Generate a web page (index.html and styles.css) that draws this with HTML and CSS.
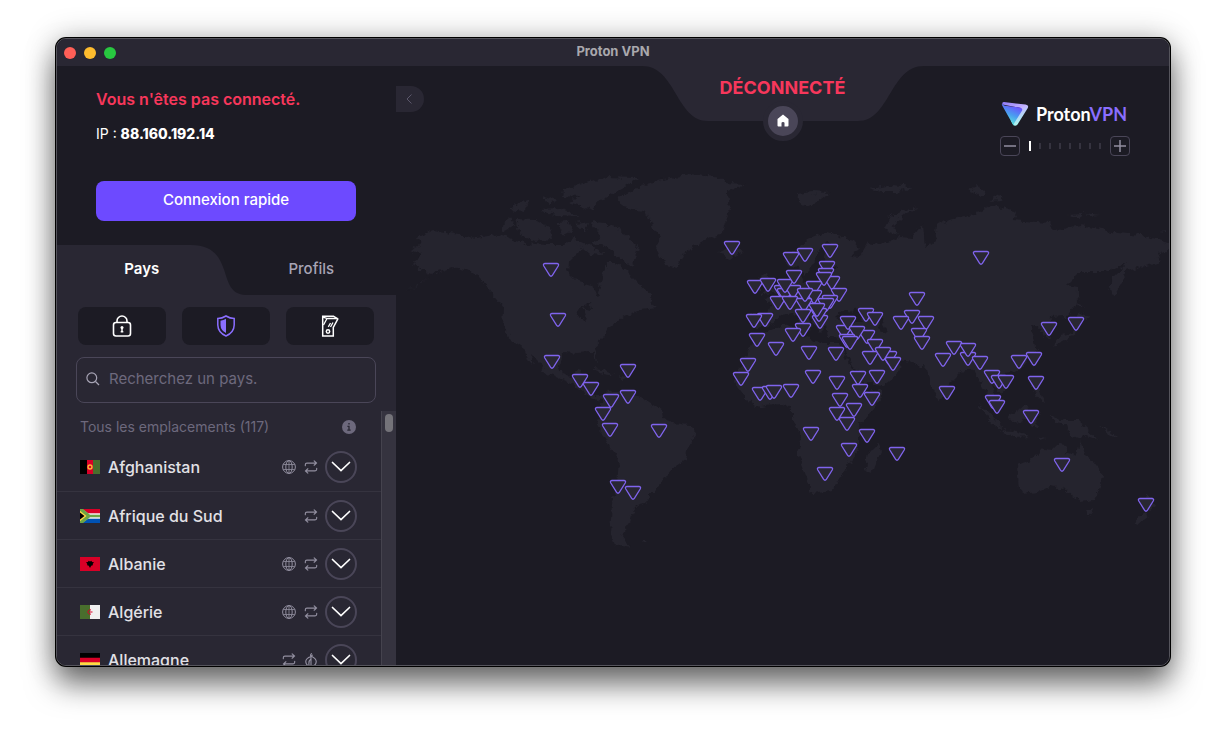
FILE: index.html
```html
<!DOCTYPE html>
<html lang="fr">
<head>
<meta charset="utf-8">
<meta name="viewport" content="width=device-width, initial-scale=1">
<title>Proton VPN</title>
<link rel="stylesheet" href="styles.css">
</head>
<body>
<svg class="defs" aria-hidden="true">
  <symbol id="i-globe" viewBox="0 0 14 14"><g fill="none" stroke="currentColor"><circle cx="7" cy="7" r="6.400"/><ellipse cx="7" cy="7" rx="3.200" ry="6.400"/><path d="M7 .6v12.800M1.200 4.500H12.800M1.200 9.500H12.800" stroke-width=".8"/></g></symbol>
  <symbol id="i-swap" viewBox="0 0 16 16"><path d="M1.500 6.500V5.300Q1.500 3.500 3.300 3.500H14M11.600 1L14.300 3.500L11.600 6M14.500 9.500v1.200q0 1.800-1.800 1.800H2M4.400 10L1.700 12.500L4.400 15" fill="none" stroke="currentColor" stroke-width="1.300" stroke-linecap="round"/></symbol>
  <symbol id="i-tor" viewBox="0 0 16 16"><path d="M8.500 .8Q6.800 2.600 8 4Q2 6 2 10Q2.500 15 8 15Q13.500 15 14 10Q14 6.500 9.500 4.200M8 4V15M8 6.500Q4.800 9.200 5.800 14.200M9.500 2.500L8 4" fill="none" stroke="currentColor" stroke-width="1.300" stroke-linecap="round"/></symbol>
  <symbol id="i-down" viewBox="0 0 20 12"><path d="M1.500 1.500L10 9.500L18.500 1.500" fill="none" stroke="currentColor" stroke-width="1.700" stroke-linecap="round"/></symbol>
  <symbol id="pin" viewBox="-9 -1 18 16" overflow="visible"><path d="M-6.200 .5H6.200Q8.300 .8 7.200 3L1.500 12.200Q0 14.400-1.500 12.200L-7.200 3Q-8.300 .8-6.200 .5Z" fill="#292733" stroke="#8064ee" stroke-width="1.300"/></symbol>
</svg>

<main class="window">
  <header class="titlebar">
    <div class="lights"><button class="light close" aria-label="Fermer"></button><button class="light minimise" aria-label="Réduire"></button><button class="light zoom" aria-label="Agrandir"></button></div>
    <h1 class="title">Proton VPN</h1>
  </header>

  <div class="content">
    <aside class="sidebar">
      <section class="connection">
        <p class="state">Vous n'êtes pas connecté.</p>
        <p class="ip">IP : <strong>88.160.192.14</strong></p>
        <button class="quick">Connexion rapide</button>
      </section>

      <nav class="tabs">
        <svg class="tab-shape" viewBox="0 0 340 50" preserveAspectRatio="none" aria-hidden="true"><path d="M0 0H134C156 0 163 11 168 26C173 42 176 50 192 50H0Z" fill="#292733"/></svg>
        <button class="tab active">Pays</button>
        <button class="tab">Profils</button>
      </nav>

      <section class="panel">
        <div class="filters">
          <button class="filter" aria-label="Secure Core"><svg width="20" height="24" viewBox="0 0 20 24"><g fill="none" stroke="currentColor" stroke-width="1.600"><rect x="1.500" y="8.500" width="17" height="13.500" rx="2.500"/><path d="M5 8.500V7a5 5 0 0 1 10 0v1.500"/></g><circle cx="10" cy="13.500" r="1.500" fill="currentColor"/><path d="M10 13v5M8.700 17.700h2.600" stroke="currentColor" stroke-width="1.500"/></svg></button>
          <button class="filter on" aria-label="NetShield"><svg width="20" height="24" viewBox="0 0 20 24"><path d="M10 2Q14 4.500 18.200 4.500V11Q18 18.500 10 22Q2 18.500 1.800 11V4.500Q6 4.500 10 2Z" fill="none" stroke="currentColor" stroke-width="1.500"/><path d="M10 4.800V19Q4.700 16.500 4.500 11V6.800Q7.500 6.400 10 4.800Z" fill="currentColor"/></svg></button>
          <button class="filter" aria-label="Kill Switch"><svg width="20" height="24" viewBox="0 0 20 24"><g fill="none" stroke="currentColor" stroke-width="1.500"><path d="M13.300 14V22H2.700V2.200H13.500L17.800 5L13.300 13.500V15"/><path d="M3 3.200L7.500 4.500H17.500M7 4.500L3.500 11M10.500 9L8.300 12.800M13 8.500L10.500 13" stroke-width="1.300"/><circle cx="8" cy="17.500" r="1.700"/></g></svg></button>
        </div>
        <label class="search">
          <svg width="14" height="14" viewBox="0 0 14 14" aria-hidden="true"><path d="M9.500 9.500L13 13" stroke="currentColor" stroke-width="1.300"/><circle cx="5.800" cy="5.800" r="4.900" fill="none" stroke="currentColor" stroke-width="1.200"/></svg>
          <input type="search" placeholder="Recherchez un pays." aria-label="Recherchez un pays.">
        </label>
        <div class="list-wrap">
          <div class="list">
            <h2 class="list-head">Tous les emplacements (117)<svg width="14" height="14" viewBox="0 0 14 14" aria-hidden="true"><circle cx="7" cy="7" r="7" fill="#6d697d"/><path d="M7 3v1.600M5.400 6.300H7V10M5.300 10.200h3.400" stroke="#292733" stroke-width="1.300" fill="none"/></svg></h2>
            <ul>
              <li class="row"><svg class="flag" viewBox="0 0 20 14"><path fill="#000" d="M0 0h7v14H0z"/><path fill="#d80027" d="M7 0h6v14H7z"/><path fill="#496e2d" d="M13 0h7v14h-7z"/><circle cx="10" cy="7" r="2" fill="none" stroke="#ffb637" stroke-width="1.400"/></svg><span class="name">Afghanistan</span><svg class="feat"><use href="#i-globe"/></svg><svg class="feat"><use href="#i-swap"/></svg><button class="more" aria-label="Afficher Afghanistan"><svg><use href="#i-down"/></svg></button></li>
              <li class="row"><svg class="flag" viewBox="0 0 20 14"><path fill="#f0f0f0" d="M0 0h20v14H0z"/><path fill="#d80027" d="M2 0h18v4.300H8z"/><path fill="#0052b4" d="M2 14h18V9.700H8z"/><path fill="#6da544" d="M0 0h3l7 5.800h10v2.400H10L3 14H0z"/><path fill="#ffda44" d="M0 1.800L6.500 7L0 12.200z"/><path fill="#000" d="M0 3.500L4.500 7L0 10.500z"/></svg><span class="name">Afrique du Sud</span><svg class="feat"><use href="#i-swap"/></svg><button class="more" aria-label="Afficher Afrique du Sud"><svg><use href="#i-down"/></svg></button></li>
              <li class="row"><svg class="flag" viewBox="0 0 20 14"><path fill="#d80027" d="M0 0h20v14H0z"/><path d="M8.500 3.800L10 4.500l1.500-.7.500 1.200 2 .2-1.200 1.500v1.500l-1.600.5L10 11l-1.200-2.300-1.600-.5V6.700L6 5.200l2-.2z"/></svg><span class="name">Albanie</span><svg class="feat"><use href="#i-globe"/></svg><svg class="feat"><use href="#i-swap"/></svg><button class="more" aria-label="Afficher Albanie"><svg><use href="#i-down"/></svg></button></li>
              <li class="row"><svg class="flag" viewBox="0 0 20 14"><path fill="#f0f0f0" d="M0 0h20v14H0z"/><path fill="#496e2d" d="M0 0h10v14H0z"/><path d="M11 5A2.200 2.200 0 1 0 11 9M10 7h2.500" fill="none" stroke="#d80027"/></svg><span class="name">Algérie</span><svg class="feat"><use href="#i-globe"/></svg><svg class="feat"><use href="#i-swap"/></svg><button class="more" aria-label="Afficher Algérie"><svg><use href="#i-down"/></svg></button></li>
              <li class="row"><svg class="flag" viewBox="0 0 20 14"><path d="M0 0h20v5H0z"/><path fill="#d80027" d="M0 4.700h20v5H0z"/><path fill="#ffda44" d="M0 9.300h20V14H0z"/></svg><span class="name">Allemagne</span><svg class="feat"><use href="#i-swap"/></svg><svg class="feat"><use href="#i-tor"/></svg><button class="more" aria-label="Afficher Allemagne"><svg><use href="#i-down"/></svg></button></li>
            </ul>
          </div>
          <div class="scrollbar"><div class="thumb"></div></div>
        </div>
      </section>
    </aside>

    <section class="map" aria-label="Carte des serveurs">
      <svg class="world" viewBox="396 66 773 599" preserveAspectRatio="xMidYMin slice" aria-hidden="true">
        <filter id="coast" x="0" y="0" width="100%" height="100%" color-interpolation-filters="sRGB"><feTurbulence type="fractalNoise" baseFrequency=".16" numOctaves="3" seed="4"/><feDisplacementMap in="SourceGraphic" scale="8" xChannelSelector="R" yChannelSelector="G"/></filter>
        <g filter="url(#coast)" fill="#25242e">
          <path d="M416 237L433 230L449 233L476 238L499 234L526 243L546 245L564 245L575 236L583 248L569 262L568 272L576 280L592 285L597 297L600 287L602 277L607 262L616 262L627 272L640 285L652 295L650 303L657 308L640 310L623 317L610 328L603 338L595 347L598 362L592 352L578 353L563 352L559 365L562 373L573 377L577 370L583 371L582 380L593 383L592 393L604 398L603 402L590 397L573 385L557 378L545 373L540 363L531 354L535 366L529 362L524 348L509 338L503 325L504 308L496 298L483 282L473 272L453 267L439 272L419 283L406 292L433 275L416 267L413 262L421 255L411 251L420 244Z"/>
          <path d="M617 198L643 185L657 181L690 174L723 178L727 183L745 184L728 192L730 208L725 222L723 232L703 242L683 253L677 268L665 265L657 248L660 237L653 228L647 212L623 207Z"/>
          <path d="M563 190L590 181L607 177L638 178L623 188L600 200L592 210L569 202L580 197L562 196ZM590 222L607 223L627 235L638 247L633 265L620 260L607 246L590 244L602 236ZM501 226L511 217L516 225L504 231ZM516 219L535 220L550 228L552 239L535 241L520 235ZM508 209L530 199L524 211ZM542 195L558 200L548 204ZM538 210L558 209L580 216L556 215ZM557 222L567 221L572 230L562 235ZM576 224L588 222L586 233ZM570 237L590 246L604 255L590 254Z"/>
          <path d="M603 402L607 392L620 390L640 397L650 403L662 410L663 420L673 423L690 425L697 432L688 447L685 460L673 468L667 475L655 493L647 493L649 502L638 505L632 512L628 525L622 537L631 548L615 545L610 533L612 503L617 483L619 460L610 448L602 433L597 428L600 418L598 408Z"/>
          <path d="M591 369L603 370L616 376L603 374ZM619 376L630 377L622 380ZM641 539L648 539L644 542Z"/>
          <path d="M719 252L730 247L743 252L731 259Z"/>
          <path d="M757 333L765 332L780 326L797 325L799 334L815 341L827 343L840 343L843 353L858 377L867 392L882 390L882 398L870 414L858 427L858 450L847 467L843 473L833 490L812 493L805 473L798 453L802 437L792 418L792 408L780 403L755 407L747 400L735 383L737 373L750 347ZM877 443L881 451L873 472L865 470L868 452L875 448Z"/>
          <path d="M751 329L750 314L767 314L771 303L763 298L776 296L782 290L790 286L795 280L798 272L803 281L815 282L826 277L829 268L842 268L827 264L824 255L835 246L827 243L817 253L813 266L804 275L799 268L787 265L785 258L797 250L807 240L827 232L853 240L860 248L850 256L860 257L868 243L880 245L900 237L912 238L923 223L925 248L935 240L937 225L950 220L980 212L990 205L1017 212L1013 220L1050 223L1057 230L1080 225L1117 233L1143 235L1169 243V249L1157 255L1160 262L1137 268L1123 272L1125 278L1113 297L1110 288L1113 277L1127 263L1107 272L1080 272L1067 285L1078 287L1078 302L1067 317L1050 318L1047 325L1052 336L1045 339L1040 327L1030 325L1034 336L1037 350L1020 370L1003 373L1008 387L1000 393L992 383L996 405L987 393L980 383L973 370L963 370L950 383L945 397L938 400L930 383L927 368L920 367L913 362L896 360L887 352L893 360L901 364L899 372L883 385L863 383L850 360L845 352L845 338L828 337L826 326L820 332L808 314L804 309L812 324L809 330L794 313L781 315L773 325Z"/>
          <path d="M758 277L767 273L772 286L776 293L762 294L766 286ZM753 286L759 282L759 290L752 291ZM796 194L812 192L830 193L822 199L808 207L800 202ZM870 189L893 185L912 187L897 192L880 192ZM884 229L890 217L905 210L920 207L907 213L893 225L899 235ZM970 190L977 186L987 193L980 197ZM988 201L998 196L1004 200ZM1066 214L1083 213L1080 218ZM1085 213L1098 215L1090 216ZM1160 231L1166 230L1166 232Z"/>
          <path d="M1076 289L1080 303L1083 309L1079 306ZM1080 313L1089 317L1079 324L1074 320ZM1079 324L1076 335L1064 340L1053 346L1059 337L1073 333ZM1034 357L1038 360L1034 367ZM1032 377L1038 378L1040 390L1045 402L1038 398L1032 388ZM979 405L987 410L1000 424L1001 429L992 423ZM999 430L1013 431L1030 436L1016 437ZM1008 415L1018 410L1026 403L1029 411L1023 423L1013 422ZM1031 416L1041 414L1036 420L1037 429L1030 425ZM1035 438L1048 437L1040 440ZM1050 416L1065 421L1078 421L1089 430L1098 440L1087 436L1079 439L1070 435L1067 425L1056 423ZM1101 425L1108 430L1120 438L1108 434Z"/>
          <path d="M1017 466L1033 459L1043 449L1053 450L1059 444L1067 445L1065 452L1077 456L1080 440L1085 455L1094 463L1103 475L1100 488L1094 500L1080 502L1072 497L1064 488L1050 486L1037 492L1023 494L1019 489ZM1085 510L1093 510L1089 517ZM1147 494L1153 501L1156 506L1148 512ZM1144 513L1149 516L1138 525L1133 523Z"/>
          <path fill="#1c1b24" d="M576 309L590 304L592 310L582 308L586 321L583 321ZM835 318L846 308L850 313L857 309L864 321L850 321ZM875 310L883 309L882 320L888 331L881 333L877 320Z"/>
        </g>
        <g class="pins" id="pins"></g>
      </svg>

      <button class="collapse" aria-label="Réduire le panneau"><svg width="6" height="10" viewBox="0 0 6 10"><path d="M5.500 .5L1 5L5.500 9.500" fill="none" stroke="currentColor"/></svg></button>

      <div class="status">
        <svg class="notch" viewBox="0 0 282 55" aria-hidden="true"><path d="M0 0C34 0 34 55 66 55H216C248 55 248 0 282 0Z" fill="#292733"/></svg>
        <p class="status-text">DÉCONNECTÉ</p>
        <button class="home" aria-label="Accueil"><svg width="12" height="13" viewBox="0 0 12 13"><path d="M6 .5L11.500 5V11.500Q11.500 12.500 10.500 12.500H7.500V9Q7.500 8 6 8Q4.500 8 4.500 9V12.500H1.500Q.5 12.500 .5 11.500V5Z" fill="#fff"/></svg></button>
      </div>

      <div class="corner">
        <div class="brand">
          <svg width="28" height="26" viewBox="0 0 28 26" aria-hidden="true"><defs><linearGradient id="g1" x1="0" y1="0" x2=".6" y2="1"><stop offset="0" stop-color="#8f78f5"/><stop offset=".5" stop-color="#c3b3ff"/><stop offset="1" stop-color="#a6ffed"/></linearGradient><linearGradient id="g2" x1=".8" y1="0" x2=".4" y2="1"><stop offset=".1" stop-color="#6d4aff"/><stop offset=".55" stop-color="#4a9cf0"/><stop offset="1" stop-color="#5cf0d8"/></linearGradient></defs><path d="M3 1L24.500 3.500Q28.500 4.200 26.500 7.500L16.500 23.500Q14 26 12 23.500L10 20L20 7L1.500 3.500Q.8 1 3 1Z" fill="url(#g1)"/><path d="M1 2.500Q2 4.500 4 4.800L18.500 6.500Q22.500 7 20.800 10L13 22.500L13 24.500Q12 24 11.500 22.800L1.200 4.500Q.6 3.500 1 2.500Z" fill="url(#g2)"/></svg>
          <span class="brand-name">Proton<span>VPN</span></span>
        </div>
        <div class="zoomer">
          <button class="step" aria-label="Zoom arrière"><svg width="12" height="12" viewBox="0 0 12 12"><path d="M0 6H12" stroke="currentColor" stroke-width="1.500"/></svg></button>
          <input class="zoom-range" type="range" min="0" max="7" value="0" aria-label="Zoom">
          <button class="step" aria-label="Zoom avant"><svg width="12" height="12" viewBox="0 0 12 12"><path d="M0 6H12M6 0V12" stroke="currentColor" stroke-width="1.500"/></svg></button>
        </div>
      </div>
    </section>
  </div>
</main>
<script src="map.js"></script>
</body>
</html>
```
FILE: styles.css
```css
* { box-sizing: border-box; }
body {
  margin: 0;
  min-height: 100vh;
  padding: 38px 56px 74px;
  background: #fff;
  color: #fff;
  font-family: Inter, "Liberation Sans", sans-serif;
  font-size: 16px;
  line-height: 24px;
  display: flex;
  overflow: hidden;
}
button { margin: 0; padding: 0; border: 0; background: none; color: inherit; font: inherit; cursor: pointer; }
p, h1, h2, ul { margin: 0; padding: 0; }
svg { display: block; }
.defs { position: absolute; width: 0; height: 0; }

.window {
  flex: 1;
  min-width: 0;
  height: calc(100vh - 112px);
  display: flex;
  flex-direction: column;
  border: 1px solid #55545c;
  border-radius: 10px;
  background: #1c1b24;
  overflow: hidden;
  box-shadow: 0 0 0 1px #000, 0 18px 30px rgba(0, 0, 0, .55), 0 0 30px rgba(0, 0, 0, .25);
}
.titlebar {
  flex: none;
  height: 27px;
  display: grid;
  grid-template-columns: 1fr auto 1fr;
  align-items: center;
  background: #292733;
}
.lights { display: flex; gap: 8px; padding-left: 7px; }
.light { width: 12px; height: 12px; border-radius: 50%; }
.close { background: #ff5f57; }
.minimise { background: #febc2e; }
.zoom { background: #28c840; }
.title { padding-bottom: 3px; color: #a9a8ad; font-size: 13px; line-height: 16px; font-weight: 700; }
.content { flex: 1; min-height: 0; display: flex; }

.sidebar { flex: none; width: 339px; display: flex; flex-direction: column; }
.connection { padding: 21px 40px 24px 39px; }
.state { color: #f7375b; font-weight: 600; }
.ip { margin-top: 11px; font-size: 14px; }
.ip strong { font-weight: 800; }
.quick {
  display: block;
  width: 100%;
  height: 40px;
  margin-top: 35px;
  padding-bottom: 2px;
  border-radius: 8px;
  background: #6d4aff;
  font-size: 15px;
  font-weight: 500;
}
.tabs { position: relative; display: grid; grid-template-columns: 1fr 1fr; height: 50px; }
.tab-shape { position: absolute; width: 100%; height: 100%; }
.tab { position: relative; padding-bottom: 2px; color: #a7a4b5; font-size: 15px; font-weight: 500; }
.active { color: #fff; font-weight: 600; }
.panel { flex: 1; min-height: 0; display: flex; flex-direction: column; background: #292733; }
.filters { display: grid; grid-template-columns: 1fr 1fr 1fr; gap: 16px; padding: 12px 22px 12px 21px; }
.filter { display: grid; place-items: center; height: 38px; border-radius: 8px; background: #1c1b24; }
.on { color: #8a6eff; }
.search {
  flex: none;
  display: flex;
  align-items: center;
  gap: 9px;
  height: 46px;
  margin: 0 20px 8px 19px;
  padding: 0 9px 2px;
  border: 1px solid #4a4658;
  border-radius: 8px;
  color: #a7a4b5;
}
.search input { flex: 1; min-width: 0; padding: 0; border: 0; outline: 0; background: none; color: #fff; font: inherit; font-size: 15px; }
.search input::placeholder { color: #6d697d; opacity: 1; }
.list-wrap { flex: 1; min-height: 0; display: flex; }
.list { flex: 1; overflow: hidden; }
.list-head {
  display: flex;
  align-items: center;
  justify-content: space-between;
  height: 32px;
  padding: 0 25px 0 23px;
  color: #6d697d;
  font-size: 14px;
  font-weight: 400;
}
.list ul { list-style: none; }
.row {
  display: flex;
  align-items: center;
  height: 48px;
  padding: 0 24px 0 23px;
}
.row + .row { border-top: 1px solid #35333f; }
.flag { width: 20px; height: 14px; }
.name { flex: 1; margin-left: 8px; color: #e2e1e6; font-weight: 500; }
.feat { width: 14px; height: 14px; margin-left: 8px; color: #928fa0; }
.more {
  display: grid;
  place-items: center;
  width: 32px;
  height: 32px;
  margin-left: 7px;
  border: 2px solid #4a4658;
  border-radius: 50%;
}
.more svg { width: 20px; height: 12px; }
.scrollbar { width: 15px; padding: 3px; border-left: 1px solid #45434e; background: #35333f; }
.thumb { width: 8px; height: 18px; border-radius: 4px; background: #747379; }

.map { flex: 1; min-width: 0; position: relative; overflow: hidden; background: #1c1b24; }
.world { width: 100%; height: 100%; }
.collapse {
  position: absolute;
  top: 20px;
  left: 0;
  display: grid;
  place-items: center;
  width: 28px;
  height: 26px;
  padding-right: 3px;
  border-radius: 0 13px 13px 0;
  background: #292733;
  color: #5b576b;
}
.status {
  position: absolute;
  top: 0;
  left: 50%;
  width: 282px;
  margin-left: -141px;
  text-align: center;
}
.notch { position: absolute; width: 282px; height: 55px; }
.status-text { position: relative; padding-top: 10px; color: #f7375b; font-size: 18px; font-weight: 700; }
.home {
  position: relative;
  display: grid;
  place-items: center;
  width: 40px;
  height: 40px;
  margin: 1px auto 0;
  padding-bottom: 1px;
  border: 5px solid #292733;
  border-radius: 50%;
  background: #4a4658;
}
.corner { position: absolute; top: 35px; right: 39px; width: 130px; }
.brand { display: flex; align-items: center; gap: 7px; height: 26px; padding-left: 1px; }
.brand-name { font-family: Lato, Inter, sans-serif; font-size: 18px; font-weight: 700; }
.brand-name span { color: #8a6eff; }
.zoomer { display: flex; align-items: center; justify-content: space-between; margin-top: 9px; }
.step {
  display: grid;
  place-items: center;
  width: 20px;
  height: 20px;
  border: 1px solid #4a4658;
  border-radius: 4px;
  color: #928fa0;
}
.zoom-range {
  appearance: none;
  width: 72px;
  height: 10px;
  margin: 0;
  background: repeating-linear-gradient(90deg, #35333f 0 2px, transparent 2px 10px) 0 center / 100% 6px no-repeat;
}
.zoom-range::-webkit-slider-thumb { appearance: none; width: 2px; height: 10px; background: #fff; }
```
FILE: map.js
```js
// Server locations: centre x and top y of each marker, in map units.
const places = [
  [551,263],[558,313],[552,355],[580,374],[591,382],[628,364],[628,390],[611,394],[603,407],[610,423],[659,424],[618,480],[633,486],
  [732,241],[755,280],[768,278],[782,285],[785,288],[793,285],[785,279],[778,296],[790,296],[765,313],[754,314],[757,333],[776,342],[748,358],
  [791,252],[805,248],[830,244],[827,261],[826,268],[832,276],[824,272],[794,270],[814,281],[839,288],[814,290],[830,295],[826,298],[804,298],[805,288],
  [820,315],[819,308],[817,303],[803,309],[803,323],[793,328],[809,346],[836,347],
  [866,308],[875,312],[844,325],[848,316],[867,330],[857,326],[847,334],[850,336],[875,339],[870,351],[889,351],[883,347],[893,357],
  [917,292],[912,310],[901,316],[926,316],[919,328],[922,336],[943,353],[954,341],[968,352],[968,343],[980,356],[981,251],
  [1076,317],[1049,322],[1019,355],[1034,352],
  [741,372],[760,387],[770,386],[774,385],[791,384],[813,370],[837,376],[858,371],[877,370],[860,384],[872,392],[840,393],[837,407],[854,403],[847,417],
  [811,427],[867,429],[849,443],[897,447],[825,467],
  [992,370],[999,375],[1006,375],[1036,376],[947,386],[993,395],[997,400],[1031,410],[1062,458],[1146,498]
];
document.getElementById('pins').innerHTML = places
  .map(([x, y]) => `<use href="#pin" x="${x - 9}" y="${y - 1}" width="18" height="16"/>`)
  .join('');
```
